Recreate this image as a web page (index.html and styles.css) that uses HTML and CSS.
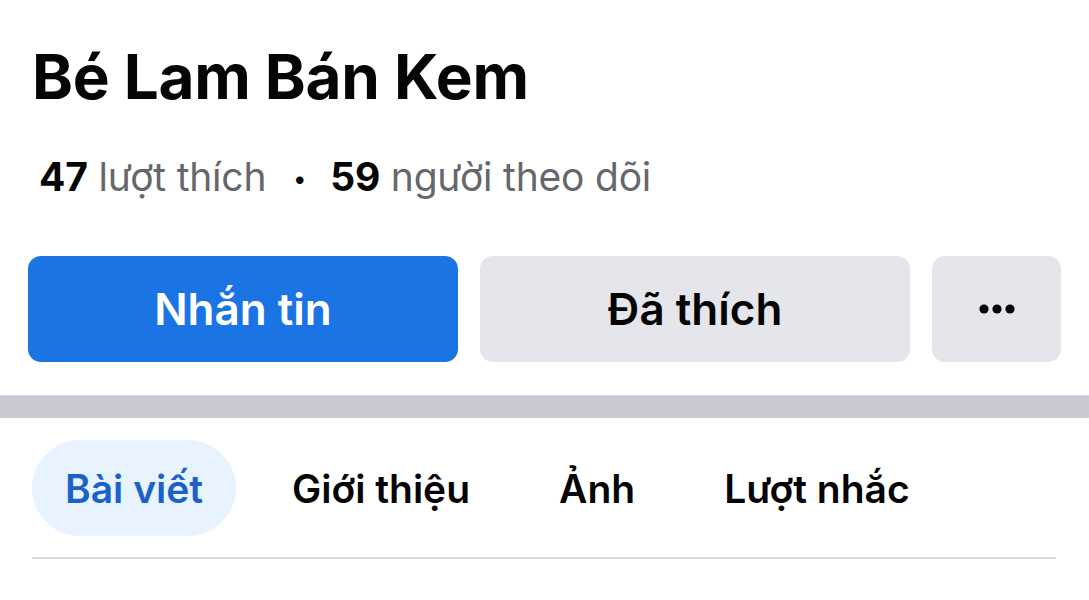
FILE: index.html
```html
<!DOCTYPE html>
<html lang="vi">
<head>
<meta charset="utf-8">
<link rel="stylesheet" href="styles.css">
</head>
<body>
<div class="page">
  <section class="profile">
    <h1 class="name">Bé Lam Bán Kem</h1>
    <p class="stats"><b>47</b> lượt thích <span class="dot">•</span> <b>59</b> người theo dõi</p>
    <div class="actions">
      <button class="btn btn-primary">Nhắn tin</button>
      <button class="btn btn-secondary">Đã thích</button>
      <button class="btn btn-more" aria-label="Thêm">
        <svg width="40" height="12" viewBox="0 0 40 12"><circle cx="7" cy="6" r="4.6" fill="#050505"/><circle cx="20" cy="6" r="4.6" fill="#050505"/><circle cx="33" cy="6" r="4.6" fill="#050505"/></svg>
      </button>
    </div>
  </section>
  <div class="band"></div>
  <nav class="tabs">
    <a class="tab active">Bài viết</a>
    <a class="tab">Giới thiệu</a>
    <a class="tab">Ảnh</a>
    <a class="tab">Lượt nhắc</a>
  </nav>
</div>
</body>
</html>
```
FILE: styles.css
```css
* { box-sizing: border-box; }
html, body { margin: 0; padding: 0; background: #fff; }
body {
  font-family: Inter, "Noto Sans", "Liberation Sans", sans-serif;
  color: #050505;
  width: 1089px;
  height: 600px;
  overflow: hidden;
}
.profile { padding: 0 28px; }
.name {
  margin: 0;
  padding: 37px 0 0 4px;
  font-size: 62px;
  line-height: 80px;
  font-weight: 700;
  letter-spacing: -0.3px;
}
.stats {
  margin: 0;
  padding: 36px 0 0 11px;
  font-size: 39px;
  line-height: 48px;
  color: #65676b;
  letter-spacing: -0.2px;
}
.stats b { color: #050505; font-weight: 700; }
.stats .dot { color: #050505; font-size: 24px; margin: 0 13px 0 16px; vertical-align: 4px; }
.actions {
  display: flex;
  gap: 22px;
  margin-top: 53px;
}
.btn {
  height: 106px;
  border: 0;
  border-radius: 13px;
  font-family: inherit;
  font-size: 44px;
  font-weight: 600;
  display: flex;
  align-items: center;
  justify-content: center;
  padding: 0;
}
.btn-primary { flex: 1 1 0; background: #1b74e4; color: #fff; }
.btn-secondary { flex: 1 1 0; background: #e4e6eb; color: #050505; }
.btn-more { flex: 0 0 129px; background: #e4e6eb; }
.band {
  height: 23px;
  margin-top: 33px;
  background: #c9cad1;
  border-top: 1px solid #d6d7dc;
}
.tabs {
  display: flex;
  gap: 23px;
  margin: 22px 33px 0 32px;
  padding-bottom: 21px;
  border-bottom: 2px solid #dadde1;
}
.tab {
  height: 96px;
  padding: 0 33px;
  border-radius: 48px;
  display: flex;
  align-items: center;
  font-size: 39px;
  font-weight: 600;
  color: #050505;
}
.tab.active { background: #e7f3ff; color: #1a62c9; }
```
